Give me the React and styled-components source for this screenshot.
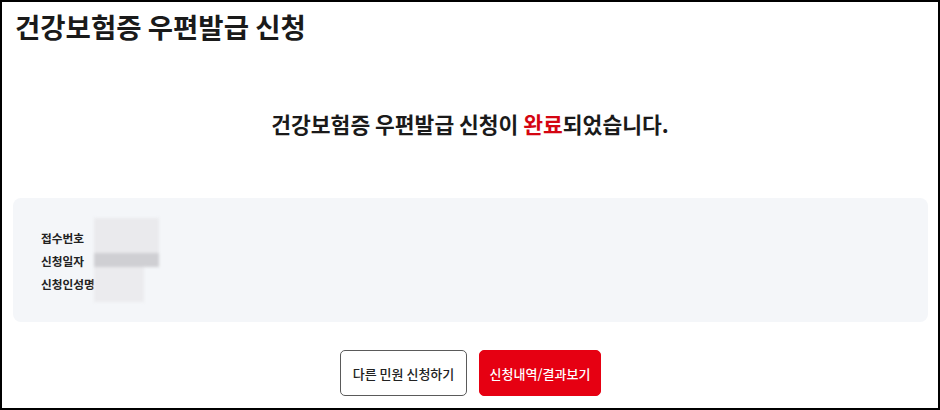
import React from 'react';
import styled, { createGlobalStyle } from 'styled-components';

const GlobalStyle = createGlobalStyle`
  html, body { margin: 0; padding: 0; background: #fff; }
  body { font-family: "Noto Sans CJK KR", "Noto Sans", sans-serif; color: #1a1a1a; }
`;

const Frame = styled.div`
  width: 940px;
  height: 410px;
  box-sizing: border-box;
  border: 2px solid #000;
  display: flex;
  flex-direction: column;
  overflow: hidden;
`;

const PageTitle = styled.h1`
  margin: 0;
  padding: 6px 0 0 13px;
  font-size: 27.5px;
  line-height: 36px;
  font-weight: 700;
  color: #1a1a1a;
`;

const Message = styled.p`
  margin: 65px 0 0;
  text-align: center;
  font-size: 21.5px;
  line-height: 30px;
  font-weight: 700;
  color: #1a1a1a;
`;

const Highlight = styled.span`
  color: #d40511;
`;

const InfoBox = styled.div`
  margin: 59px 10px 0 11px;
  height: 124px;
  box-sizing: border-box;
  background: #f4f6f9;
  border-radius: 8px;
  padding: 0 28px;
  display: flex;
  align-items: center;
`;

const Labels = styled.ul`
  list-style: none;
  margin: 0;
  padding: 0;
  width: 53px;
`;

const Label = styled.li`
  font-size: 11.7px;
  line-height: 23px;
  font-weight: 600;
  color: #222;
  white-space: nowrap;
`;

const Redacted = styled.div`
  display: flex;
  flex-direction: column;
  filter: blur(1.5px);
`;

const Blur = styled.div`
  width: ${(p) => p.w}px;
  height: ${(p) => p.h}px;
  background: ${(p) => p.c};
`;

const Buttons = styled.div`
  margin-top: 28px;
  display: flex;
  justify-content: center;
  gap: 12px;
  padding-left: 1px;
`;

const Button = styled.button`
  width: ${(p) => p.w}px;
  height: 46px;
  padding: 0;
  box-sizing: border-box;
  border-radius: 5px;
  border: 1px solid ${(p) => (p.primary ? '#e60012' : '#5a5a5a')};
  background: ${(p) => (p.primary ? '#e60012' : '#fff')};
  color: ${(p) => (p.primary ? '#fff' : '#222')};
  font-family: "Noto Sans CJK KR", "Noto Sans", sans-serif;
  font-size: 13px;
  font-weight: 500;
  cursor: pointer;
`;

export default function App() {
  return (
    <>
      <GlobalStyle />
      <Frame>
        <PageTitle>건강보험증 우편발급 신청</PageTitle>
        <Message>
          건강보험증 우편발급 신청이 <Highlight>완료</Highlight>되었습니다.
        </Message>
        <InfoBox>
          <Labels>
            <Label>접수번호</Label>
            <Label>신청일자</Label>
            <Label>신청인성명</Label>
          </Labels>
          <Redacted>
            <Blur w={65} h={35} c="#eaeaed" />
            <Blur w={65} h={14} c="#cfcfd3" />
            <Blur w={50} h={35} c="#ebebee" />
          </Redacted>
        </InfoBox>
        <Buttons>
          <Button w={127}>다른 민원 신청하기</Button>
          <Button w={122} primary>신청내역/결과보기</Button>
        </Buttons>
      </Frame>
    </>
  );
}
